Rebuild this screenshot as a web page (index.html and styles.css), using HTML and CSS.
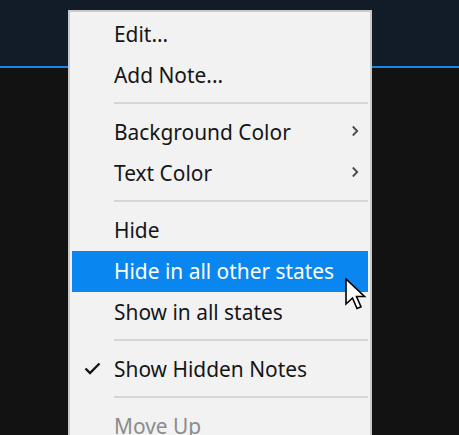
FILE: index.html
```html
<!DOCTYPE html>
<html>
<head>
<meta charset="utf-8">
<link rel="stylesheet" href="styles.css">
</head>
<body>
<div class="app">
  <header class="topbar"></header>
  <main class="canvas"></main>
</div>
<div class="menu">
  <div class="item">Edit...</div>
  <div class="item">Add Note...</div>
  <div class="sep"></div>
  <div class="item">Background Color<svg class="chev" width="8" height="12" viewBox="0 0 8 12"><polyline points="1.8,1.5 6.2,6 1.8,10.5" fill="none" stroke="#4a4a4a" stroke-width="1.8"/></svg></div>
  <div class="item">Text Color<svg class="chev" width="8" height="12" viewBox="0 0 8 12"><polyline points="1.8,1.5 6.2,6 1.8,10.5" fill="none" stroke="#4a4a4a" stroke-width="1.8"/></svg></div>
  <div class="sep"></div>
  <div class="item">Hide</div>
  <div class="item active">Hide in all other states</div>
  <div class="item">Show in all states</div>
  <div class="sep"></div>
  <div class="item checked"><svg class="check" width="17" height="13" viewBox="0 0 17 13"><polyline points="1.5,6.5 6,11 15.5,1.5" fill="none" stroke="#151515" stroke-width="2.4"/></svg>Show Hidden Notes</div>
  <div class="sep"></div>
  <div class="item disabled">Move Up</div>
</div>
<svg class="cursor" width="24" height="34" viewBox="0 0 24 34"><path d="M1 1 L1 26 L7.5 20 L12 30.5 L16 28.8 L11.5 18.5 L19.5 18.5 Z" fill="#ffffff" stroke="#000000" stroke-width="1.6" stroke-linejoin="miter"/></svg>
</body>
</html>
```
FILE: styles.css
```css
html, body {
  margin: 0;
  padding: 0;
  width: 459px;
  height: 435px;
  overflow: hidden;
  background: #121212;
  font-family: "Noto Sans", "Open Sans", sans-serif;
}
.app {
  display: flex;
  flex-direction: column;
  height: 100%;
}
.topbar {
  height: 66px;
  background: #121c28;
  border-bottom: 2px solid #1a87e8;
  flex: none;
}
.canvas {
  flex: 1;
  background: #121212;
}
.menu {
  position: absolute;
  left: 68px;
  top: 10px;
  width: 296px;
  height: 440px;
  background: #f2f2f2;
  border: 2px solid #c9c9c9;
  padding: 2px 2px;
  box-sizing: content-box;
  display: flex;
  flex-direction: column;
}
.item {
  position: relative;
  height: 41px;
  box-sizing: border-box;
  padding-bottom: 2px;
  flex: none;
  display: flex;
  align-items: center;
  padding-left: 42px;
  font-size: 20.9px;
  color: #161616;
  white-space: nowrap;
}
.item.active {
  background: #0a86f0;
  color: #ffffff;
}
.item.disabled {
  color: #8c8c8c;
}
.chev {
  position: absolute;
  right: 9px;
  top: 13px;
}
.check {
  position: absolute;
  left: 12px;
  top: 13px;
}
.sep {
  flex: none;
  height: 16px;
  box-sizing: border-box;
  padding-top: 6px;
  margin-left: 42px;
}
.sep::before {
  content: "";
  display: block;
  height: 2px;
  background: #d6d6d6;
}
.cursor {
  position: absolute;
  left: 345px;
  top: 278px;
}
```
